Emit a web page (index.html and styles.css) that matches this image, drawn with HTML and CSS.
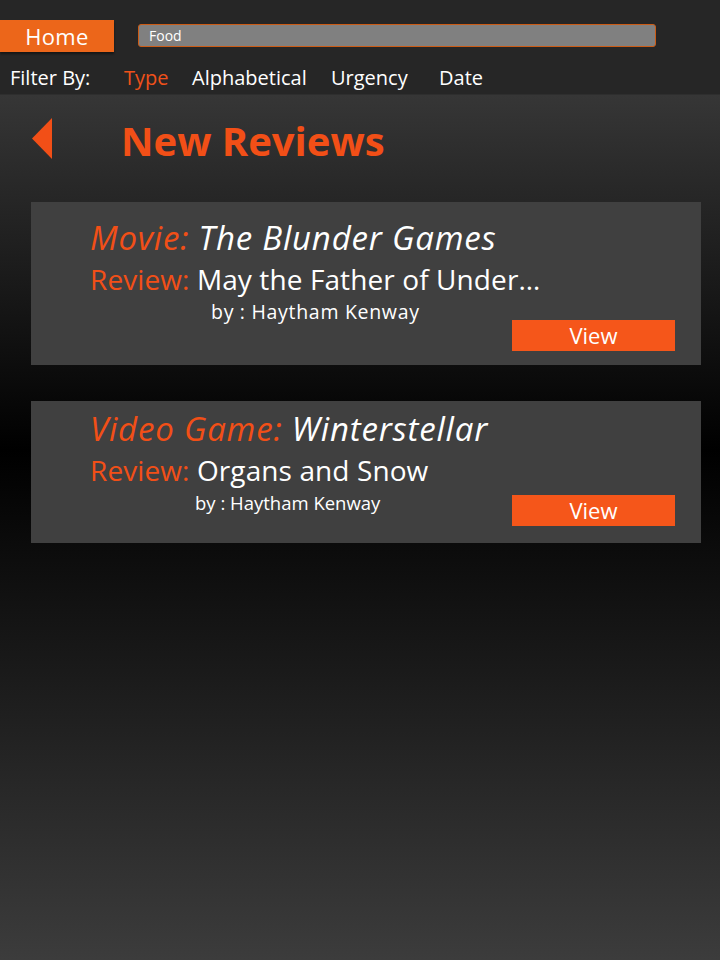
FILE: index.html
```html
<!DOCTYPE html>
<html lang="en">
<head>
<meta charset="utf-8">
<title>New Reviews</title>
<link rel="stylesheet" href="styles.css">
</head>
<body>
<header class="topbar">
  <div class="toprow">
    <button class="home-btn">Home</button>
    <div class="search"><span class="search-text">Food</span></div>
  </div>
  <nav class="filters">
    <span class="filter-label">Filter By:</span>
    <span class="filter f-type active">Type</span>
    <span class="filter f-alpha">Alphabetical</span>
    <span class="filter f-urg">Urgency</span>
    <span class="filter f-date">Date</span>
  </nav>
</header>
<main class="content">
  <div class="title-row">
    <svg class="back" width="21" height="41" viewBox="0 0 21 41"><polygon points="20,0 20,41 0,20.5" fill="#f24f17"/></svg>
    <h1 class="title">New Reviews</h1>
  </div>
  <section class="card card-1">
    <div class="line-type"><span class="kind">Movie:</span> The Blunder Games</div>
    <div class="line-review"><span class="kind-r">Review:</span> May the Father of Under…</div>
    <div class="line-by by-1">by : Haytham Kenway</div>
    <div class="btn-row btn-row-1"><button class="view-btn">View</button></div>
  </section>
  <section class="card card-2">
    <div class="line-type"><span class="kind">Video Game:</span> Winterstellar</div>
    <div class="line-review"><span class="kind-r">Review:</span> Organs and Snow</div>
    <div class="line-by by-2">by : Haytham Kenway</div>
    <div class="btn-row btn-row-2"><button class="view-btn">View</button></div>
  </section>
</main>
</body>
</html>
```
FILE: styles.css
```css
* { box-sizing: border-box; }
html, body { margin: 0; padding: 0; }
body {
  width: 720px;
  min-height: 960px;
  font-family: "Open Sans", "Noto Sans", sans-serif;
  color: #fff;
  background: linear-gradient(to bottom, #262626 0px, #262626 94px, #363636 95px, #000 450px, #3c3c3c 960px);
}
.topbar {
  height: 94px;
  background: #262626;
  padding-top: 20px;
}
.toprow {
  display: flex;
  align-items: flex-start;
}
.home-btn {
  width: 114px;
  height: 32px;
  border: 0;
  margin: 0;
  padding: 0;
  background: #ec661a;
  color: #fff;
  font-family: inherit;
  font-size: 22px;
  line-height: 32px;
  letter-spacing: 0.3px;
  box-shadow: 0 2px 2px rgba(0,0,0,0.45);
}
.search {
  margin-left: 24px;
  margin-top: 4px;
  width: 518px;
  height: 23px;
  background: #808080;
  border: 1px solid #cc5c16;
  border-radius: 3px;
  padding-left: 10px;
  display: flex;
  align-items: center;
}
.search-text { font-size: 14px; color: #fff; }
.filters {
  display: flex;
  align-items: baseline;
  margin-top: 12px;
  font-size: 20px;
  line-height: 28px;
  padding-left: 10px;
}
.filter-label { width: 114px; }
.filter { color: #fff; }
.filter.active { color: #f0511a; }
.f-type { width: 68px; }
.f-alpha { width: 139px; }
.f-urg { width: 108px; }
.content {
  padding: 20px 19px 0 31px;
}
.title-row {
  display: flex;
  align-items: center;
  height: 48px;
}
.back { margin-left: 1px; flex: none; }
.title {
  margin: 0 0 0 68px;
  padding-top: 5px;
  font-size: 40px;
  font-weight: 700;
  color: #f24f17;
  line-height: 48px;
}
.card {
  background: #404040;
  padding-left: 59px;
  padding-right: 26px;
}
.card-1 { margin-top: 40px; height: 163px; padding-top: 14px; }
.card-2 { margin-top: 36px; height: 142px; padding-top: 6px; }
.line-type {
  font-style: italic;
  font-size: 33px;
  line-height: 44px;
  letter-spacing: 0.8px;
  color: #fff;
}
.kind { color: #f24f17; }
.kind-r { color: #f24f17; }
.line-review {
  font-size: 28px;
  line-height: 38px;
  letter-spacing: 0.1px;
}
.line-by {
  line-height: 28px;
}
.by-1 { padding-left: 121px; font-size: 19.5px; letter-spacing: 0.7px; }
.by-2 { padding-left: 105px; font-size: 18.5px; letter-spacing: 0; }
.btn-row { display: flex; justify-content: flex-end; }
.btn-row-1 { margin-top: -6px; }
.btn-row-2 { margin-top: -22px; }
.view-btn {
  width: 163px;
  height: 31px;
  border: 0;
  padding: 0;
  background: #f5561a;
  color: #fff;
  font-family: inherit;
  font-size: 22px;
  line-height: 31px;
}
```
